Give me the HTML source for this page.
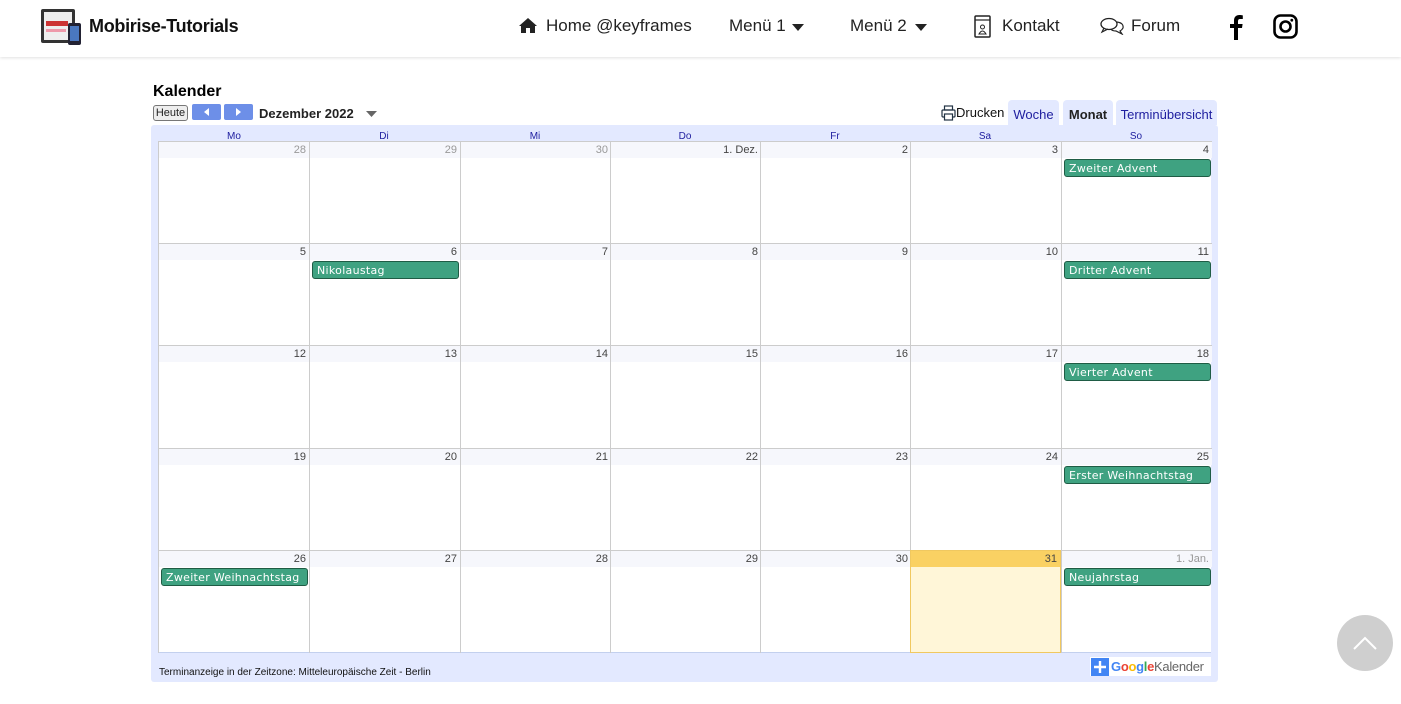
<!DOCTYPE html>
<html><head><meta charset="utf-8">
<style>
*{margin:0;padding:0;box-sizing:border-box}
body{width:1401px;height:704px;background:#fff;position:relative;overflow:hidden;font-family:"Liberation Sans",Arial,sans-serif}
.nav{position:absolute;left:0;top:0;width:1401px;height:57px;background:#fff;box-shadow:0 1px 3px rgba(0,0,0,.12)}
.nav .t{position:absolute;top:16px;font-size:17px;color:#222;font-family:"Liberation Sans",sans-serif}
.a{position:absolute}
.cal{position:absolute;left:151px;top:125px;width:1067px;height:557px;background:#e3e9ff;border-radius:3px}
.grid{position:absolute;left:159px;top:142px;width:1052px;height:511px;background:#fff;border-bottom:1px solid #c3d0ee}
.dh{position:absolute;top:131px;font-size:10px;color:#2020a0;text-align:center;width:150px}
.c{position:absolute;width:151px;height:103px;border-left:1px solid #ccc;border-top:1px solid #ccc}
.c .d{height:16px;background:#f6f7fc;text-align:right;padding-right:3px;font-size:11px;color:#444;line-height:17px}
.c .d.o{color:#999}
.e{position:absolute;left:2px;top:17px;width:147px;height:18px;background:#3fa281;border:1px solid #1f5c45;border-radius:3px;color:#fff;line-height:17px;padding-left:4px;letter-spacing:.3px;font-family:"DejaVu Sans","Liberation Sans",sans-serif;font-size:11px}
.tab{position:absolute;top:100px;height:25px;background:#e3e9ff;border-radius:4px 4px 0 0;font-size:13px;line-height:29px;text-align:center;color:#2020a0}
</style></head><body>
<div class="nav">
 <svg class="a" style="left:40px;top:7px" width="42" height="40" viewBox="0 0 42 40"><rect x="1" y="2" width="34" height="34" rx="2" fill="#333"/><rect x="4" y="5" width="28" height="28" fill="#eee"/><rect x="6" y="14" width="22" height="5" fill="#c33"/><rect x="6" y="22" width="20" height="3" fill="#e9a"/><rect x="28" y="16" width="13" height="22" rx="2" fill="#223"/><rect x="30" y="19" width="9" height="15" fill="#4a78c0"/></svg>
 <div class="t" style="left:89px;top:16px;font-weight:bold;font-size:18px;color:#111;letter-spacing:-0.3px">Mobirise-Tutorials</div>
 <svg class="a" style="left:518px;top:17px" width="20" height="17" viewBox="0 0 20 17"><path d="M10 1 L19 9 L17 9 L17 16 L12 16 L12 11 L8 11 L8 16 L3 16 L3 9 L1 9 Z" fill="#222"/></svg>
 <div class="t" style="left:546px">Home @keyframes</div>
 <div class="t" style="left:729px">Menü 1</div>
 <svg class="a" style="left:792px;top:24px" width="12" height="7"><path d="M0 0H12L6 7Z" fill="#222"/></svg>
 <div class="t" style="left:850px">Menü 2</div>
 <svg class="a" style="left:915px;top:24px" width="12" height="7"><path d="M0 0H12L6 7Z" fill="#222"/></svg>
 <svg class="a" style="left:974px;top:15px" width="18" height="23" viewBox="0 0 18 23"><rect x="1" y="1" width="15" height="21" rx="1" fill="none" stroke="#222" stroke-width="1.5"/><line x1="1" y1="5" x2="16" y2="5" stroke="#222" stroke-width="1.2"/><circle cx="8.5" cy="12" r="2" fill="none" stroke="#222"/><path d="M5 19 Q8.5 13 12 19 Z" fill="none" stroke="#222"/></svg>
 <div class="t" style="left:1002px">Kontakt</div>
 <svg class="a" style="left:1100px;top:17px" width="25" height="18" viewBox="0 0 25 18"><ellipse cx="9" cy="7" rx="8" ry="5.5" fill="none" stroke="#222" stroke-width="1.3"/><path d="M4 11 L2 15 L8 12" fill="none" stroke="#222" stroke-width="1.2"/><path d="M17 5 Q24 6 23 11 Q22 13 20 14 L22 17 L16 14 Q12 14 11 12" fill="none" stroke="#222" stroke-width="1.2"/></svg>
 <div class="t" style="left:1131px">Forum</div>
 <svg class="a" style="left:1229px;top:14px" width="14" height="26" viewBox="0 0 14 26"><path d="M9 26V14h4l.6-4H9V7.3C9 6 9.5 5 11 5h2.8V1.4C13 1.2 11.8 1 10.4 1 7 1 5 3 5 6.6V10H1v4h4v12z" fill="#000"/></svg>
 <svg class="a" style="left:1273px;top:14px" width="25" height="25" viewBox="0 0 25 25"><rect x="1.5" y="1.5" width="22" height="22" rx="6" fill="none" stroke="#000" stroke-width="2.6"/><circle cx="12.5" cy="12.5" r="5" fill="none" stroke="#000" stroke-width="2.6"/><circle cx="18.8" cy="6.2" r="1.4" fill="#000"/></svg>
</div>

<div class="a" style="left:153px;top:83px;font-size:16px;font-weight:bold;color:#000">Kalender</div>
<div class="a" style="left:153px;top:105px;width:35px;height:16px;border:1px solid #777;border-radius:3px;background:#eee;font-size:11px;line-height:14px;text-align:center;color:#222">Heute</div>
<div class="a" style="left:192px;top:104px;width:29px;height:16px;background:#6d8fe8;border-radius:2px"><svg width="29" height="16"><path d="M17 4V12L12 8Z" fill="#fff"/></svg></div>
<div class="a" style="left:224px;top:104px;width:29px;height:16px;background:#6d8fe8;border-radius:2px"><svg width="29" height="16"><path d="M12 4V12L17 8Z" fill="#fff"/></svg></div>
<div class="a" style="left:259px;top:106px;font-size:13px;font-weight:bold;color:#222">Dezember 2022</div>
<svg class="a" style="left:366px;top:111px" width="11" height="6"><path d="M0 0H11L5.5 6Z" fill="#666"/></svg>

<svg class="a" style="left:941px;top:105px" width="15" height="16" viewBox="0 0 15 16"><rect x="3.5" y="1" width="8" height="4" fill="none" stroke="#234" stroke-width="1.2"/><rect x="1" y="5" width="13" height="7" rx="1" fill="none" stroke="#234" stroke-width="1.2"/><rect x="3.5" y="9" width="8" height="6" fill="#fff" stroke="#234" stroke-width="1.2"/></svg>
<div class="a" style="left:956px;top:105px;font-size:13px;color:#111">Drucken</div>

<div class="cal"></div>
<div class="tab" style="left:1008px;width:51px">Woche</div>
<div class="tab" style="left:1063px;width:50px;font-weight:bold;color:#222">Monat</div>
<div class="tab" style="left:1116px;width:101px">Terminübersicht</div>

<div class="dh" style="left:159px">Mo</div><div class="dh" style="left:309px">Di</div><div class="dh" style="left:460px">Mi</div><div class="dh" style="left:610px">Do</div><div class="dh" style="left:760px">Fr</div><div class="dh" style="left:910px">Sa</div><div class="dh" style="left:1061px">So</div>

<div class="grid">
<div class="c" style="left:-1px;top:-1px"><div class="d o">28</div></div>
<div class="c" style="left:150px;top:-1px"><div class="d o">29</div></div>
<div class="c" style="left:301px;top:-1px"><div class="d o">30</div></div>
<div class="c" style="left:451px;top:-1px"><div class="d">1. Dez.</div></div>
<div class="c" style="left:601px;top:-1px"><div class="d">2</div></div>
<div class="c" style="left:751px;top:-1px"><div class="d">3</div></div>
<div class="c" style="left:902px;top:-1px"><div class="d">4</div><div class="e">Zweiter Advent</div></div>

<div class="c" style="left:-1px;top:101px"><div class="d">5</div></div>
<div class="c" style="left:150px;top:101px"><div class="d">6</div><div class="e">Nikolaustag</div></div>
<div class="c" style="left:301px;top:101px"><div class="d">7</div></div>
<div class="c" style="left:451px;top:101px"><div class="d">8</div></div>
<div class="c" style="left:601px;top:101px"><div class="d">9</div></div>
<div class="c" style="left:751px;top:101px"><div class="d">10</div></div>
<div class="c" style="left:902px;top:101px"><div class="d">11</div><div class="e">Dritter Advent</div></div>

<div class="c" style="left:-1px;top:203px"><div class="d">12</div></div>
<div class="c" style="left:150px;top:203px"><div class="d">13</div></div>
<div class="c" style="left:301px;top:203px"><div class="d">14</div></div>
<div class="c" style="left:451px;top:203px"><div class="d">15</div></div>
<div class="c" style="left:601px;top:203px"><div class="d">16</div></div>
<div class="c" style="left:751px;top:203px"><div class="d">17</div></div>
<div class="c" style="left:902px;top:203px"><div class="d">18</div><div class="e">Vierter Advent</div></div>

<div class="c" style="left:-1px;top:306px"><div class="d">19</div></div>
<div class="c" style="left:150px;top:306px"><div class="d">20</div></div>
<div class="c" style="left:301px;top:306px"><div class="d">21</div></div>
<div class="c" style="left:451px;top:306px"><div class="d">22</div></div>
<div class="c" style="left:601px;top:306px"><div class="d">23</div></div>
<div class="c" style="left:751px;top:306px"><div class="d">24</div></div>
<div class="c" style="left:902px;top:306px"><div class="d">25</div><div class="e">Erster Weihnachtstag</div></div>

<div class="c" style="left:-1px;top:408px"><div class="d">26</div><div class="e">Zweiter Weihnachtstag</div></div>
<div class="c" style="left:150px;top:408px"><div class="d">27</div></div>
<div class="c" style="left:301px;top:408px"><div class="d">28</div></div>
<div class="c" style="left:451px;top:408px"><div class="d">29</div></div>
<div class="c" style="left:601px;top:408px"><div class="d">30</div></div>
<div class="c" style="left:751px;top:408px;background:#fff6d8;border:1px solid #f0c860;height:103px"><div class="d" style="background:#fad163">31</div></div>
<div class="c" style="left:902px;top:408px"><div class="d o">1. Jan.</div><div class="e">Neujahrstag</div></div>
</div>

<div class="a" style="left:159px;top:667px;font-size:10px;color:#111">Terminanzeige in der Zeitzone: Mitteleuropäische Zeit - Berlin</div>
<div class="a" style="left:1090px;top:657px;width:121px;height:19px;background:#fff"></div>
<div class="a" style="left:1091px;top:658px;width:18px;height:18px;background:#4285f4"><svg width="18" height="18"><path d="M9 3V15M3 9H15" stroke="#fff" stroke-width="2.4"/></svg></div>
<div class="a" style="left:1111px;top:659px;font-size:13px;font-weight:bold;letter-spacing:-0.3px"><span style="color:#4285f4">G</span><span style="color:#ea4335">o</span><span style="color:#fbbc05">o</span><span style="color:#4285f4">g</span><span style="color:#34a853">l</span><span style="color:#ea4335">e</span><span style="color:#666;font-weight:normal;font-size:13px">Kalender</span></div>

<div class="a" style="left:1337px;top:615px;width:56px;height:56px;border-radius:50%;background:#cfcfcf"><svg width="56" height="56"><path d="M17 34L28 23L39 34" fill="none" stroke="#fff" stroke-width="2"/></svg></div>
</body></html>
